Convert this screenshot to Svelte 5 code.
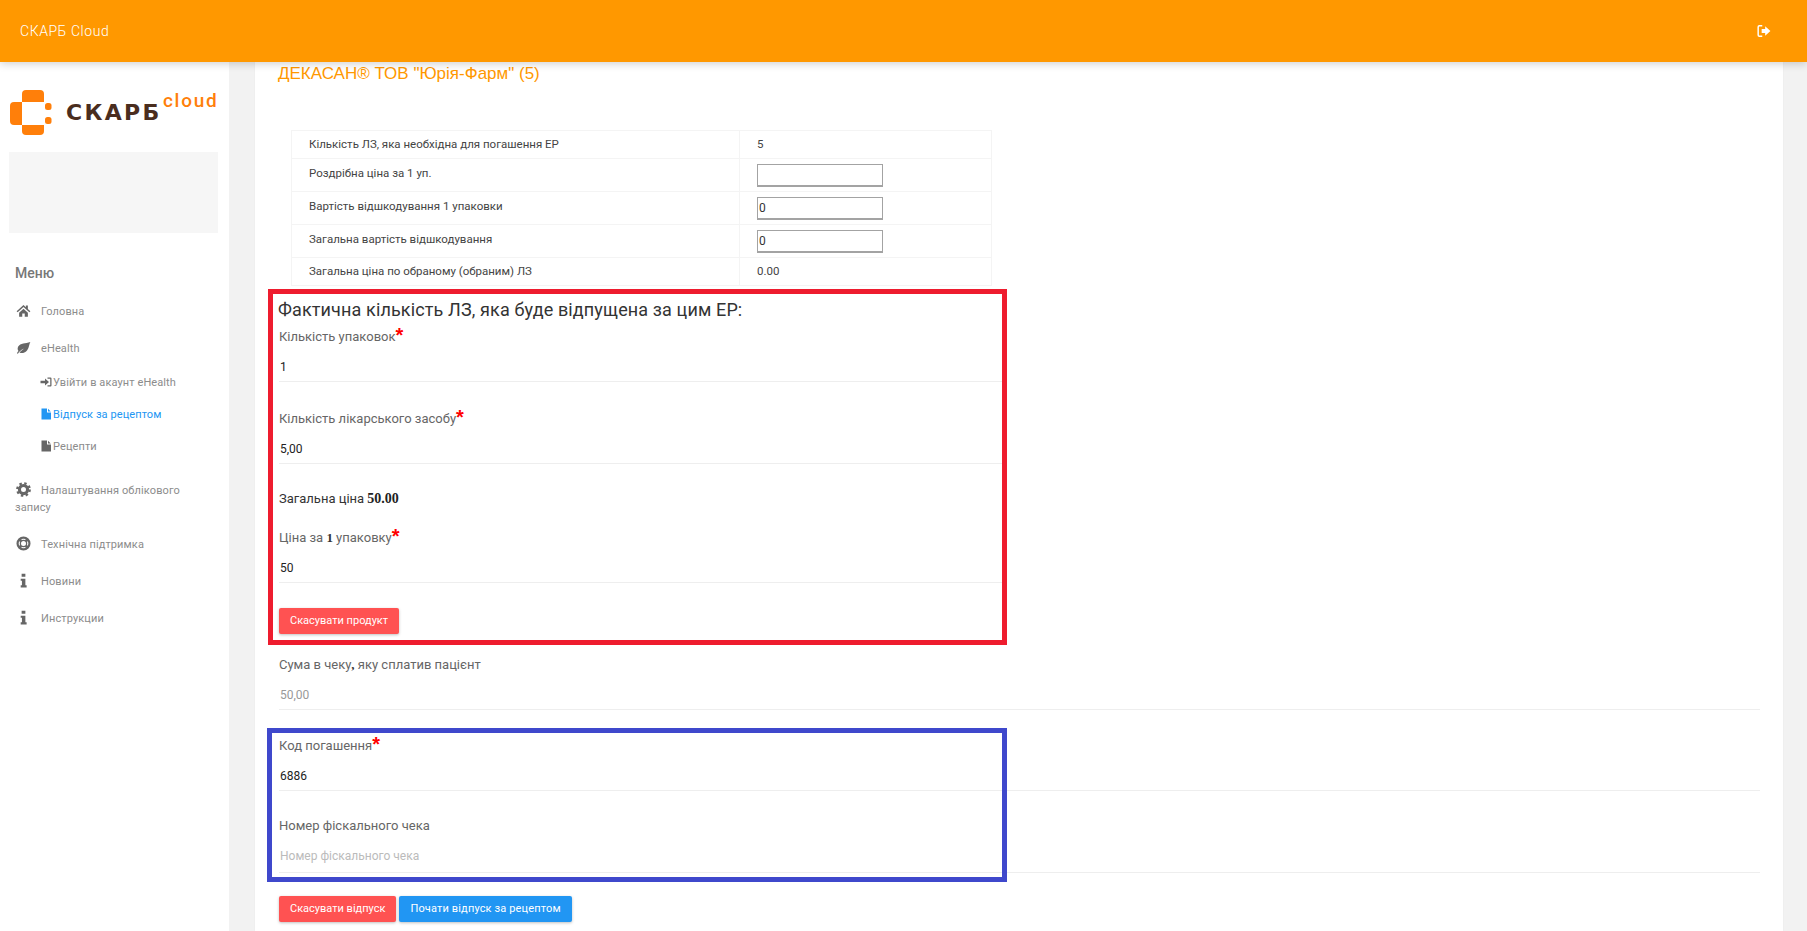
<script>
  const subItems = [
    { icon: "signin", label: "Увійти в акаунт eHealth" },
    { icon: "file", label: "Відпуск за рецептом", active: true },
    { icon: "file", label: "Рецепти" }
  ];
  const priceRows = [
    { label: "Роздрібна ціна за 1 уп.", value: "" },
    { label: "Вартість відшкодування 1 упаковки", value: "0" },
    { label: "Загальна вартість відшкодування", value: "0" }
  ];
</script>

{#snippet icon(name)}
  <svg class="ico" viewBox="0 0 24 24" aria-hidden="true">
    {#if name === "home"}
      <path d="M12 3 1 13l1.600 1.800L12 6.500l9.400 8.300L23 13l-4-3.600V4h-3.200v2.600z" />
      <path d="M5 15.500 12 9.200l7 6.300V22h-5v-5.200h-4V22H5z" />
    {:else if name === "leaf"}
      <path d="M23 3c-8 3-16 1-19.500 7.500C1.800 14 3 16.500 4 17.500 3 18.500 2 20 1.500 21l1.500 1c1-2 4-6 10-8.500-3.500 2.500-6 4.800-7.500 6.500 3.500 1.500 8 1 11-2 4.500-4.500 4-10.500 6.500-15z" />
    {:else if name === "signin"}
      <path d="M1 9.500h9V5l8 7-8 7v-4.500H1z" />
      <path d="M15 3h6a2 2 0 0 1 2 2v14a2 2 0 0 1-2 2h-6v-2.500h5.500v-13H15z" />
    {:else if name === "file"}
      <path d="M3 1h11v8h8v14H3z" />
      <path d="M16 1.500 21.500 7H16z" />
    {:else if name === "cog"}
      <circle cx="12" cy="12" r="6.500" fill="none" stroke="currentColor" stroke-width="5" />
      <circle cx="12" cy="12" r="10" fill="none" stroke="currentColor" stroke-width="3.600" stroke-dasharray="3.900 3.950" />
    {:else if name === "ring"}
      <circle cx="12" cy="12" r="9.500" fill="none" stroke="currentColor" stroke-width="3.500" />
      <circle cx="12" cy="12" r="5" fill="none" stroke="currentColor" stroke-width="2" />
      <path d="M5.500 5.500l3 3M18.500 5.500l-3 3M5.500 18.500l3-3M18.500 18.500l-3-3" stroke="currentColor" stroke-width="4.500" />
    {:else if name === "info"}
      <path d="M9 1h6v5H9zM7.500 9H15v10.500h2V23H7.500v-3.500h2v-7h-2z" />
    {/if}
  </svg>
{/snippet}

<div class="page">
  <header class="topbar">
    <span class="brand">СКАРБ Cloud</span>
    <svg class="logout" viewBox="0 0 24 24" aria-hidden="true">
      <path d="M9 3H4a2 2 0 0 0-2 2v14a2 2 0 0 0 2 2h5" fill="none" stroke="#fff" stroke-width="2.500" />
      <path d="M8 8.500h6V4l9 8-9 8v-4.500H8z" fill="#fff" />
    </svg>
  </header>

  <div class="body">
    <aside class="sidebar">
      <div class="logo">
        <svg class="logo-mark" viewBox="0 0 43 45" aria-hidden="true" fill="#ff7f0a">
          <path d="M13 12V4a4 4 0 0 1 4-4h14a4 4 0 0 1 4 4v8z" />
          <path d="M13 12v23H5a4 4 0 0 1-4-4V16a4 4 0 0 1 4-4z" />
          <path d="M13 35h22v6a4 4 0 0 1-4 4H17a4 4 0 0 1-4-4z" />
          <rect x="36" y="13" width="6.500" height="7" rx="2.500" />
          <rect x="36" y="27" width="6.500" height="7" rx="2.500" />
        </svg>
        <span class="logo-word">СКАРБ</span>
        <span class="logo-cloud">cloud</span>
      </div>
      <div class="profile"></div>

      <div class="menu-title">Меню</div>
      <nav class="menu">
        <a class="item">{@render icon("home")}<span>Головна</span></a>
        <a class="item">{@render icon("leaf")}<span>eHealth</span></a>
        <div class="sub">
          {#each subItems as s}
            <a class="sub-item" class:active={s.active}>{@render icon(s.icon)}{s.label}</a>
          {/each}
        </div>
        <a class="item wrap">{@render icon("cog")}Налаштування облікового запису</a>
        <a class="item">{@render icon("ring")}<span>Технічна підтримка</span></a>
        <a class="item">{@render icon("info")}<span>Новини</span></a>
        <a class="item">{@render icon("info")}<span>Инструкции</span></a>
      </nav>
    </aside>

    <main class="card">
      <h2 class="title">ДЕКАСАН® ТОВ "Юрія-Фарм" (5)</h2>

      <table class="summary">
        <tbody>
          <tr class="plain"><td>Кількість ЛЗ, яка необхідна для погашення ЕР</td><td>5</td></tr>
          {#each priceRows as row}
            <tr class="edit">
              <td>{row.label}</td>
              <td><input class="small" value={row.value} /></td>
            </tr>
          {/each}
          <tr class="plain"><td>Загальна ціна по обраному (обраним) ЛЗ</td><td>0.00</td></tr>
        </tbody>
      </table>

      <section class="product">
        <h3>Фактична кількість ЛЗ, яка буде відпущена за цим ЕР:</h3>
        <div class="field first">
          <label>Кількість упаковок<b class="req">*</b></label>
          <input value="1" readonly />
        </div>
        <div class="field">
          <label>Кількість лікарського засобу<b class="req">*</b></label>
          <input value="5,00" readonly />
        </div>
        <p class="total">Загальна ціна <b>50.00</b></p>
        <div class="field">
          <label>Ціна за <b class="num">1</b> упаковку<b class="req">*</b></label>
          <input value="50" readonly />
        </div>
        <button class="btn red">Скасувати продукт</button>
      </section>

      <div class="field paid">
        <label>Сума в чеку<b class="comma">,</b> яку сплатив пацієнт</label>
        <input class="muted" value="50,00" readonly />
      </div>

      <div class="codes">
        <div class="outline"></div>
        <div class="field">
          <label>Код погашення<b class="req">*</b></label>
          <input value="6886" readonly />
        </div>
        <div class="field fiscal">
          <label>Номер фіскального чека</label>
          <input placeholder="Номер фіскального чека" />
        </div>
      </div>

      <div class="actions">
        <button class="btn red">Скасувати відпуск</button>
        <button class="btn blue">Почати відпуск за рецептом</button>
      </div>
    </main>
  </div>
</div>

<style>
  :global(body) {
    background: #f2f2f2;
    font-family: Roboto, "Liberation Sans", sans-serif;
    overflow: hidden;
  }

  .page {
    height: 931px;
    overflow: hidden;
  }

  .topbar {
    position: relative;
    z-index: 2;
    height: 62px;
    display: flex;
    align-items: center;
    justify-content: space-between;
    padding: 0 36px 0 20px;
    background: #ff9800;
    box-shadow: 0 2px 8px rgba(0, 0, 0, 0.18);
    color: #fff;
  }

  .brand {
    font-size: 14px;
    font-weight: 300;
    letter-spacing: 0.55px;
  }

  .logout {
    width: 14px;
    height: 14px;
  }

  .body {
    display: flex;
    height: 869px;
  }

  .sidebar {
    width: 229px;
    flex: none;
    background: #fff;
    padding: 28px 11px 0 9px;
    box-sizing: border-box;
  }

  .logo {
    position: relative;
    height: 45px;
    display: flex;
    align-items: center;
  }

  .logo-mark {
    width: 43px;
    height: 45px;
    flex: none;
  }

  .logo-word {
    margin-left: 14px;
    font-family: "DejaVu Sans", sans-serif;
    font-weight: 700;
    font-size: 22px;
    line-height: 24px;
    letter-spacing: 2.300px;
    color: #4a2d1e;
  }

  .logo-cloud {
    position: absolute;
    left: 154px;
    top: -1px;
    font-size: 19px;
    font-weight: 500;
    line-height: 24px;
    letter-spacing: 1.700px;
    color: #ff7f0a;
  }

  .profile {
    height: 81px;
    margin-top: 17px;
    background: #f6f6f6;
  }

  .menu-title {
    margin: 30px 0 0 6px;
    font-size: 14px;
    font-weight: 500;
    line-height: 20px;
    color: #777;
  }

  .menu {
    margin-top: 20px;
    font-size: 11px;
    font-weight: 400;
    line-height: 17px;
    color: #8c8c8c;
  }

  .item {
    display: block;
    margin: 0 0 20px 6px;
    letter-spacing: 0.12px;
  }

  .item .ico {
    width: 15px;
    height: 15px;
    margin: 0 10px 0 1px;
    vertical-align: -3px;
    color: #666;
  }

  .item.wrap {
    margin-top: 27px;
    margin-bottom: 20px;
  }

  .sub {
    margin: -3px 0 0 31px;
  }

  .sub-item {
    display: block;
    margin-bottom: 15px;
    letter-spacing: 0.1px;
    color: #8c8c8c;
  }

  .sub-item .ico {
    width: 12px;
    height: 12px;
    margin-right: 1px;
    vertical-align: -2px;
    color: #666;
  }

  .sub-item.active,
  .sub-item.active .ico {
    color: #2196f3;
  }

  .ico {
    fill: currentColor;
  }

  .card {
    flex: 1;
    margin: 0 24px 0 26px;
    padding: 2px 23px 0 24px;
    background: #fff;
    box-shadow: 0 0 2px rgba(0, 0, 0, 0.04);
  }

  .title {
    margin: 0 0 46px -1px;
    font-family: "Liberation Sans", sans-serif;
    font-size: 17px;
    font-weight: 400;
    line-height: 20px;
    color: #ff9800;
  }

  .summary {
    width: 701px;
    margin-left: 12px;
    border-collapse: collapse;
    table-layout: fixed;
    font-size: 11.500px;
    color: #444;
  }

  .summary td {
    padding: 0 0 0 17px;
    border: 1px solid #f4f4f4;
  }

  .summary td:first-child {
    width: 430px;
  }

  .plain td {
    height: 26px;
    padding-bottom: 1px;
  }

  .edit td {
    height: 26px;
    vertical-align: top;
    padding-top: 5px;
    padding-bottom: 1px;
    line-height: 18px;
  }

  input.small {
    display: block;
    box-sizing: border-box;
    width: 126px;
    height: 23px;
    padding: 0 1px;
    border: 1px solid #a3a3a3;
    border-bottom-width: 2px;
    border-radius: 0;
    font: 12px Roboto, sans-serif;
    color: #333;
  }

  .product {
    width: 739px;
    box-sizing: border-box;
    margin: 3px 0 0 -11px;
    padding: 4px 0 6px 6px;
    border: 5px solid #ee1c2e;
  }

  .product h3 {
    margin: 0 0 5px -1px;
    font-size: 18px;
    font-weight: 400;
    line-height: 24px;
    letter-spacing: 0.13px;
    color: #333;
  }

  .field {
    margin-bottom: 25px;
  }

  .field.first {
    margin-bottom: 27px;
  }

  .field label {
    display: block;
    font-size: 13px;
    line-height: 20px;
    font-weight: 400;
    color: #666;
  }

  .field input {
    display: block;
    box-sizing: border-box;
    width: 100%;
    height: 35px;
    padding: 6px 0 0 1px;
    border: 0;
    border-bottom: 1px solid #eee;
    outline: 0;
    background: transparent;
    font: 12px Roboto, sans-serif;
    color: #222;
  }

  .field input.muted {
    color: #999;
  }

  .field input::placeholder {
    color: #bbb;
  }

  .fiscal {
    margin-bottom: 23px;
  }

  .field.fiscal input {
    height: 37px;
    padding-top: 4px;
  }

  .req {
    position: relative;
    top: 1px;
    font-family: "Liberation Sans", sans-serif;
    color: #f00;
    font-size: 20px;
    line-height: 10px;
  }

  .num,
  .comma {
    color: #333;
    font-family: "Liberation Serif", serif;
  }

  .total {
    margin: 3px 0 19px;
    font-size: 13px;
    line-height: 20px;
    color: #333;
  }

  .total b {
    font-family: "Liberation Serif", serif;
    font-size: 14px;
    color: #222;
  }

  .btn {
    height: 26px;
    padding: 0 11px;
    border: 0;
    border-radius: 2px;
    box-shadow: 0 1px 3px rgba(0, 0, 0, 0.25);
    font: 11px/26px Roboto, sans-serif;
    letter-spacing: 0;
    color: #fff;
  }

  .btn.red {
    background: #ff5252;
  }

  .btn.blue {
    background: #2196f3;
    letter-spacing: 0.15px;
  }

  .paid {
    margin: 10px 0 26px;
  }

  .codes {
    position: relative;
  }

  .outline {
    position: absolute;
    top: -8px;
    left: -12px;
    width: 740px;
    height: 154px;
    box-sizing: border-box;
    border: 5px solid #3f48cc;
    pointer-events: none;
  }

  .actions {
    display: flex;
    gap: 3px;
    margin-top: 1px;
  }
</style>
